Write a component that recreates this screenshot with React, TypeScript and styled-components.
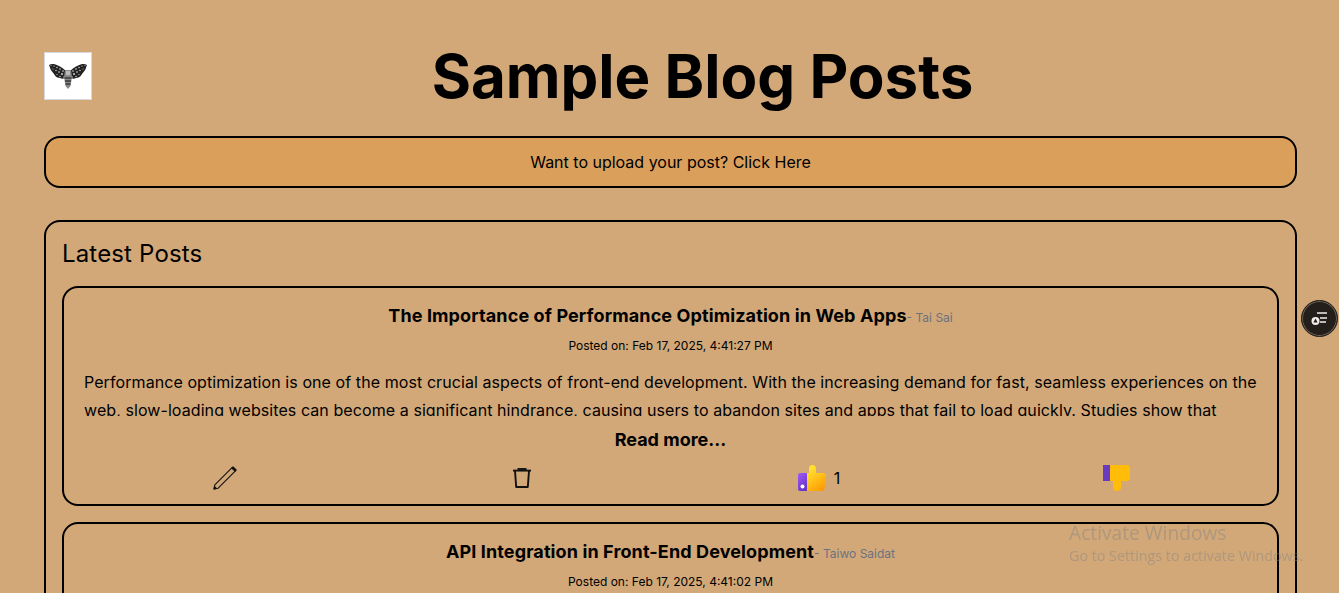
import * as React from 'react';
import styled, { createGlobalStyle } from 'styled-components';

const GlobalStyle = createGlobalStyle`
  html, body {
    margin: 0;
    height: 100%;
    overflow: hidden;
    background: #d2a878;
    color: #000;
    font-family: Inter, "Liberation Sans", sans-serif;
  }
  * { box-sizing: border-box; }
`;

const Page = styled.div`
  padding: 40px 42px 0 44px;
`;

const Header = styled.header`
  display: flex;
  align-items: center;
  gap: 16px;
  height: 72px;
`;

const Logo = styled.div`
  display: flex;
  align-items: center;
  justify-content: center;
  flex: none;
  width: 48px;
  height: 48px;
  background: #fff;
  border: 1px solid #d5d9dc;
`;

const Title = styled.h1`
  flex: 1;
  margin: 0;
  font-size: 60px;
  line-height: 72px;
  font-weight: 700;
  text-align: center;
`;

const Banner = styled.div`
  margin-top: 24px;
  height: 52px;
  display: flex;
  align-items: center;
  justify-content: center;
  background: #da9f5b;
  border: 2px solid #000;
  border-radius: 16px;
  font-size: 16px;
`;

const Section = styled.section`
  margin-top: 32px;
  padding: 16px;
  border: 2px solid #000;
  border-radius: 16px;
`;

const SectionTitle = styled.h2`
  margin: 0;
  font-size: 24px;
  line-height: 32px;
  font-weight: 400;
  letter-spacing: 0.16px;
`;

const Card = styled.article`
  margin-top: 16px;
  padding: 14px 20px 10px;
  border: 2px solid #000;
  border-radius: 16px;
`;

const PostHeading = styled.div`
  text-align: center;
  line-height: 28px;
`;

const PostTitle = styled.span`
  font-size: 18px;
  font-weight: 700;
  letter-spacing: 0.11px;
`;

const PostAuthor = styled.span`
  font-size: 12px;
  color: #6b7280;
`;

const PostDate = styled.div`
  margin-top: 6px;
  font-size: 12px;
  line-height: 16px;
  text-align: center;
`;

const PostBody = styled.p`
  margin: 14px -4px 0 0;
  height: 48px;
  overflow: hidden;
  font-size: 16px;
  line-height: 28px;
  letter-spacing: 0.08px;
`;

const ReadMore = styled.div`
  margin-top: 12px;
  font-size: 18px;
  line-height: 24px;
  font-weight: 700;
  text-align: center;
`;

const Actions = styled.div`
  display: grid;
  grid-template-columns: repeat(4, 1fr);
  margin: 10px -8px 0;
  height: 32px;
`;

const Action = styled.div`
  display: flex;
  align-items: center;
  justify-content: center;
  gap: 8px;
  font-size: 16px;
`;

const FloatingButton = styled.div`
  position: fixed;
  left: 1301px;
  top: 300px;
  display: flex;
  align-items: center;
  justify-content: center;
  width: 37px;
  height: 37px;
  background: #241f1a;
  border: 1px solid #241f1a;
  box-shadow: inset 0 0 0 1px #6b6358;
  border-radius: 50%;
`;

const Watermark = styled.div`
  position: fixed;
  left: 1069px;
  top: 521px;
  color: rgba(130, 130, 130, 0.45);
  font-family: "Open Sans", sans-serif;
  pointer-events: none;
  white-space: nowrap;
`;

const WatermarkTitle = styled.div`
  font-size: 19.2px;
  line-height: 24px;
`;

const WatermarkText = styled.div`
  font-size: 14.3px;
  line-height: 18px;
  margin-top: 2px;
`;

// moth speckles, one wing only, the other one is mirrored
const wingMarks: Array<[number, number, number]> = [
  [3, 3.5, 0.5], [6, 4, 0.6], [9, 5.5, 0.7], [12, 7, 0.8], [15, 9, 0.8],
  [5, 7, 0.5], [8, 8.5, 0.7], [11, 10, 0.8], [14, 12, 0.9], [9, 12.5, 0.6],
  [12, 14.5, 0.7], [16, 15, 0.7],
];

const MothWing = () => (
  <>
    <path d="M1 3 Q3 1.5 6 2 Q13 4 18 9 L18 15 Q15 18 12 16 Q8 16 6 12 Q2 8 1 3 Z" fill="#222" />
    {wingMarks.map(([cx, cy, r]) => <circle key={`${cx}-${cy}`} cx={cx} cy={cy} r={r} fill="#ddd" />)}
  </>
);

const MothIcon = () => (
  <svg width="40" height="28" viewBox="0 0 40 28">
    <MothWing />
    <g transform="matrix(-1 0 0 1 40 0)"><MothWing /></g>
    <path d="M17 8 H23 L24 15 L22.5 24 L20 27 L17.5 24 L16 15 Z" fill="#888" />
    <path d="M16.5 16 H23.5 M17 19 H23 M17.5 22 H22.5" stroke="#111" strokeWidth="1.1" />
    <path d="M18 9 H22 V13 H18 Z" fill="#bbb" />
  </svg>
);

const PencilIcon = () => (
  <svg width="24" height="24" viewBox="0 0 24 24" fill="none" stroke="#111" strokeWidth="1.1" strokeLinejoin="round">
    <path d="M1 23 L1.8 18.8 L18.8 1.8 L22.2 5.2 L5.2 22.2 Z" />
    <path d="M1 23 L1.5 20.6 L3.4 22.5 Z M18.8 1.8 L20 0.8 L23.2 4 L22.2 5.2 Z" fill="#111" />
  </svg>
);

const TrashIcon = () => (
  <svg width="18" height="20" viewBox="0 0 18 20" fill="none" stroke="#111" strokeWidth="1.9" strokeLinejoin="round">
    <path d="M0 2.6 H18" />
    <path d="M4.5 1 H13.5" />
    <path d="M2 3 L3.2 19 H14.8 L16 3" />
  </svg>
);

const ThumbUpIcon = () => (
  <svg width="28" height="26" viewBox="0 0 28 26">
    <defs>
      <linearGradient id="thumbGold" x1="0.3" y1="0.1" x2="0.8" y2="1">
        <stop offset="0" stopColor="#ffe02e" />
        <stop offset="1" stopColor="#ff9800" />
      </linearGradient>
      <linearGradient id="thumbPurple" x1="0" y1="0" x2="0.5" y2="1">
        <stop offset="0" stopColor="#a05cf5" />
        <stop offset="1" stopColor="#6a35c9" />
      </linearGradient>
    </defs>
    <path d="M9 8 H11 V3.5 A3.5 3.5 0 0 1 18 3.5 V8 H25.5 A2.5 2.5 0 0 1 28 10.5 L26.5 23 A3 3 0 0 1 23.5 26 H9 Z" fill="url(#thumbGold)" />
    <path d="M2 8 H9 V26 H2 A2 2 0 0 1 0 24 V10 A2 2 0 0 1 2 8 Z" fill="url(#thumbPurple)" />
    <circle cx="4.5" cy="21.5" r="2" fill="#fff" />
  </svg>
);

const ThumbDownIcon = () => (
  <svg width="27" height="26" viewBox="0 0 27 26">
    <path d="M6 0 H24 A3 3 0 0 1 27 3 V13 A3 3 0 0 1 24 16 H18 V22 A4 4 0 0 1 10 22 V16 H6 Z" fill="#ffbd0a" />
    <rect x="0" y="0" width="7" height="16" fill="#6a3ac0" />
  </svg>
);

const ReaderIcon = () => (
  <svg width="20" height="18" viewBox="0 0 20 18">
    <path d="M7 3 H17 M10 8 H17 M10 12 H16" stroke="#f2eee8" strokeWidth="1.5" />
    <circle cx="5.5" cy="11" r="4" fill="#f2eee8" />
    <path d="M5.5 8.6 L7.6 12.4 H3.4 Z" fill="#241f1a" />
  </svg>
);

type Post = {
  title: string;
  author: string;
  date: string;
  body: string;
  likes: number;
};

const posts: Post[] = [
  {
    title: 'The Importance of Performance Optimization in Web Apps',
    author: 'Tai Sai',
    date: 'Feb 17, 2025, 4:41:27 PM',
    body: 'Performance optimization is one of the most crucial aspects of front-end development. With the increasing demand for fast, seamless experiences on the web, slow-loading websites can become a significant hindrance, causing users to abandon sites and apps that fail to load quickly. Studies show that',
    likes: 1,
  },
  {
    title: 'API Integration in Front-End Development',
    author: 'Taiwo Saidat',
    date: 'Feb 17, 2025, 4:41:02 PM',
    body: 'Modern web applications rarely work alone, and most of them depend on data that comes from a remote service.',
    likes: 0,
  },
];

const App = () => (
  <>
    <GlobalStyle />
    <Page>
      <Header>
        <Logo><MothIcon /></Logo>
        <Title>Sample Blog Posts</Title>
      </Header>
      <Banner>Want to upload your post? Click Here</Banner>
      <Section>
        <SectionTitle>Latest Posts</SectionTitle>
        {posts.map(post => (
          <Card key={post.title}>
            <PostHeading>
              <PostTitle>{post.title}</PostTitle>
              <PostAuthor>- {post.author}</PostAuthor>
            </PostHeading>
            <PostDate>Posted on: {post.date}</PostDate>
            <PostBody>{post.body}</PostBody>
            <ReadMore>Read more...</ReadMore>
            <Actions>
              <Action><PencilIcon /></Action>
              <Action><TrashIcon /></Action>
              <Action><ThumbUpIcon />{post.likes}</Action>
              <Action><ThumbDownIcon /></Action>
            </Actions>
          </Card>
        ))}
      </Section>
    </Page>
    <FloatingButton><ReaderIcon /></FloatingButton>
    <Watermark>
      <WatermarkTitle>Activate Windows</WatermarkTitle>
      <WatermarkText>Go to Settings to activate Windows.</WatermarkText>
    </Watermark>
  </>
);

export default App;
